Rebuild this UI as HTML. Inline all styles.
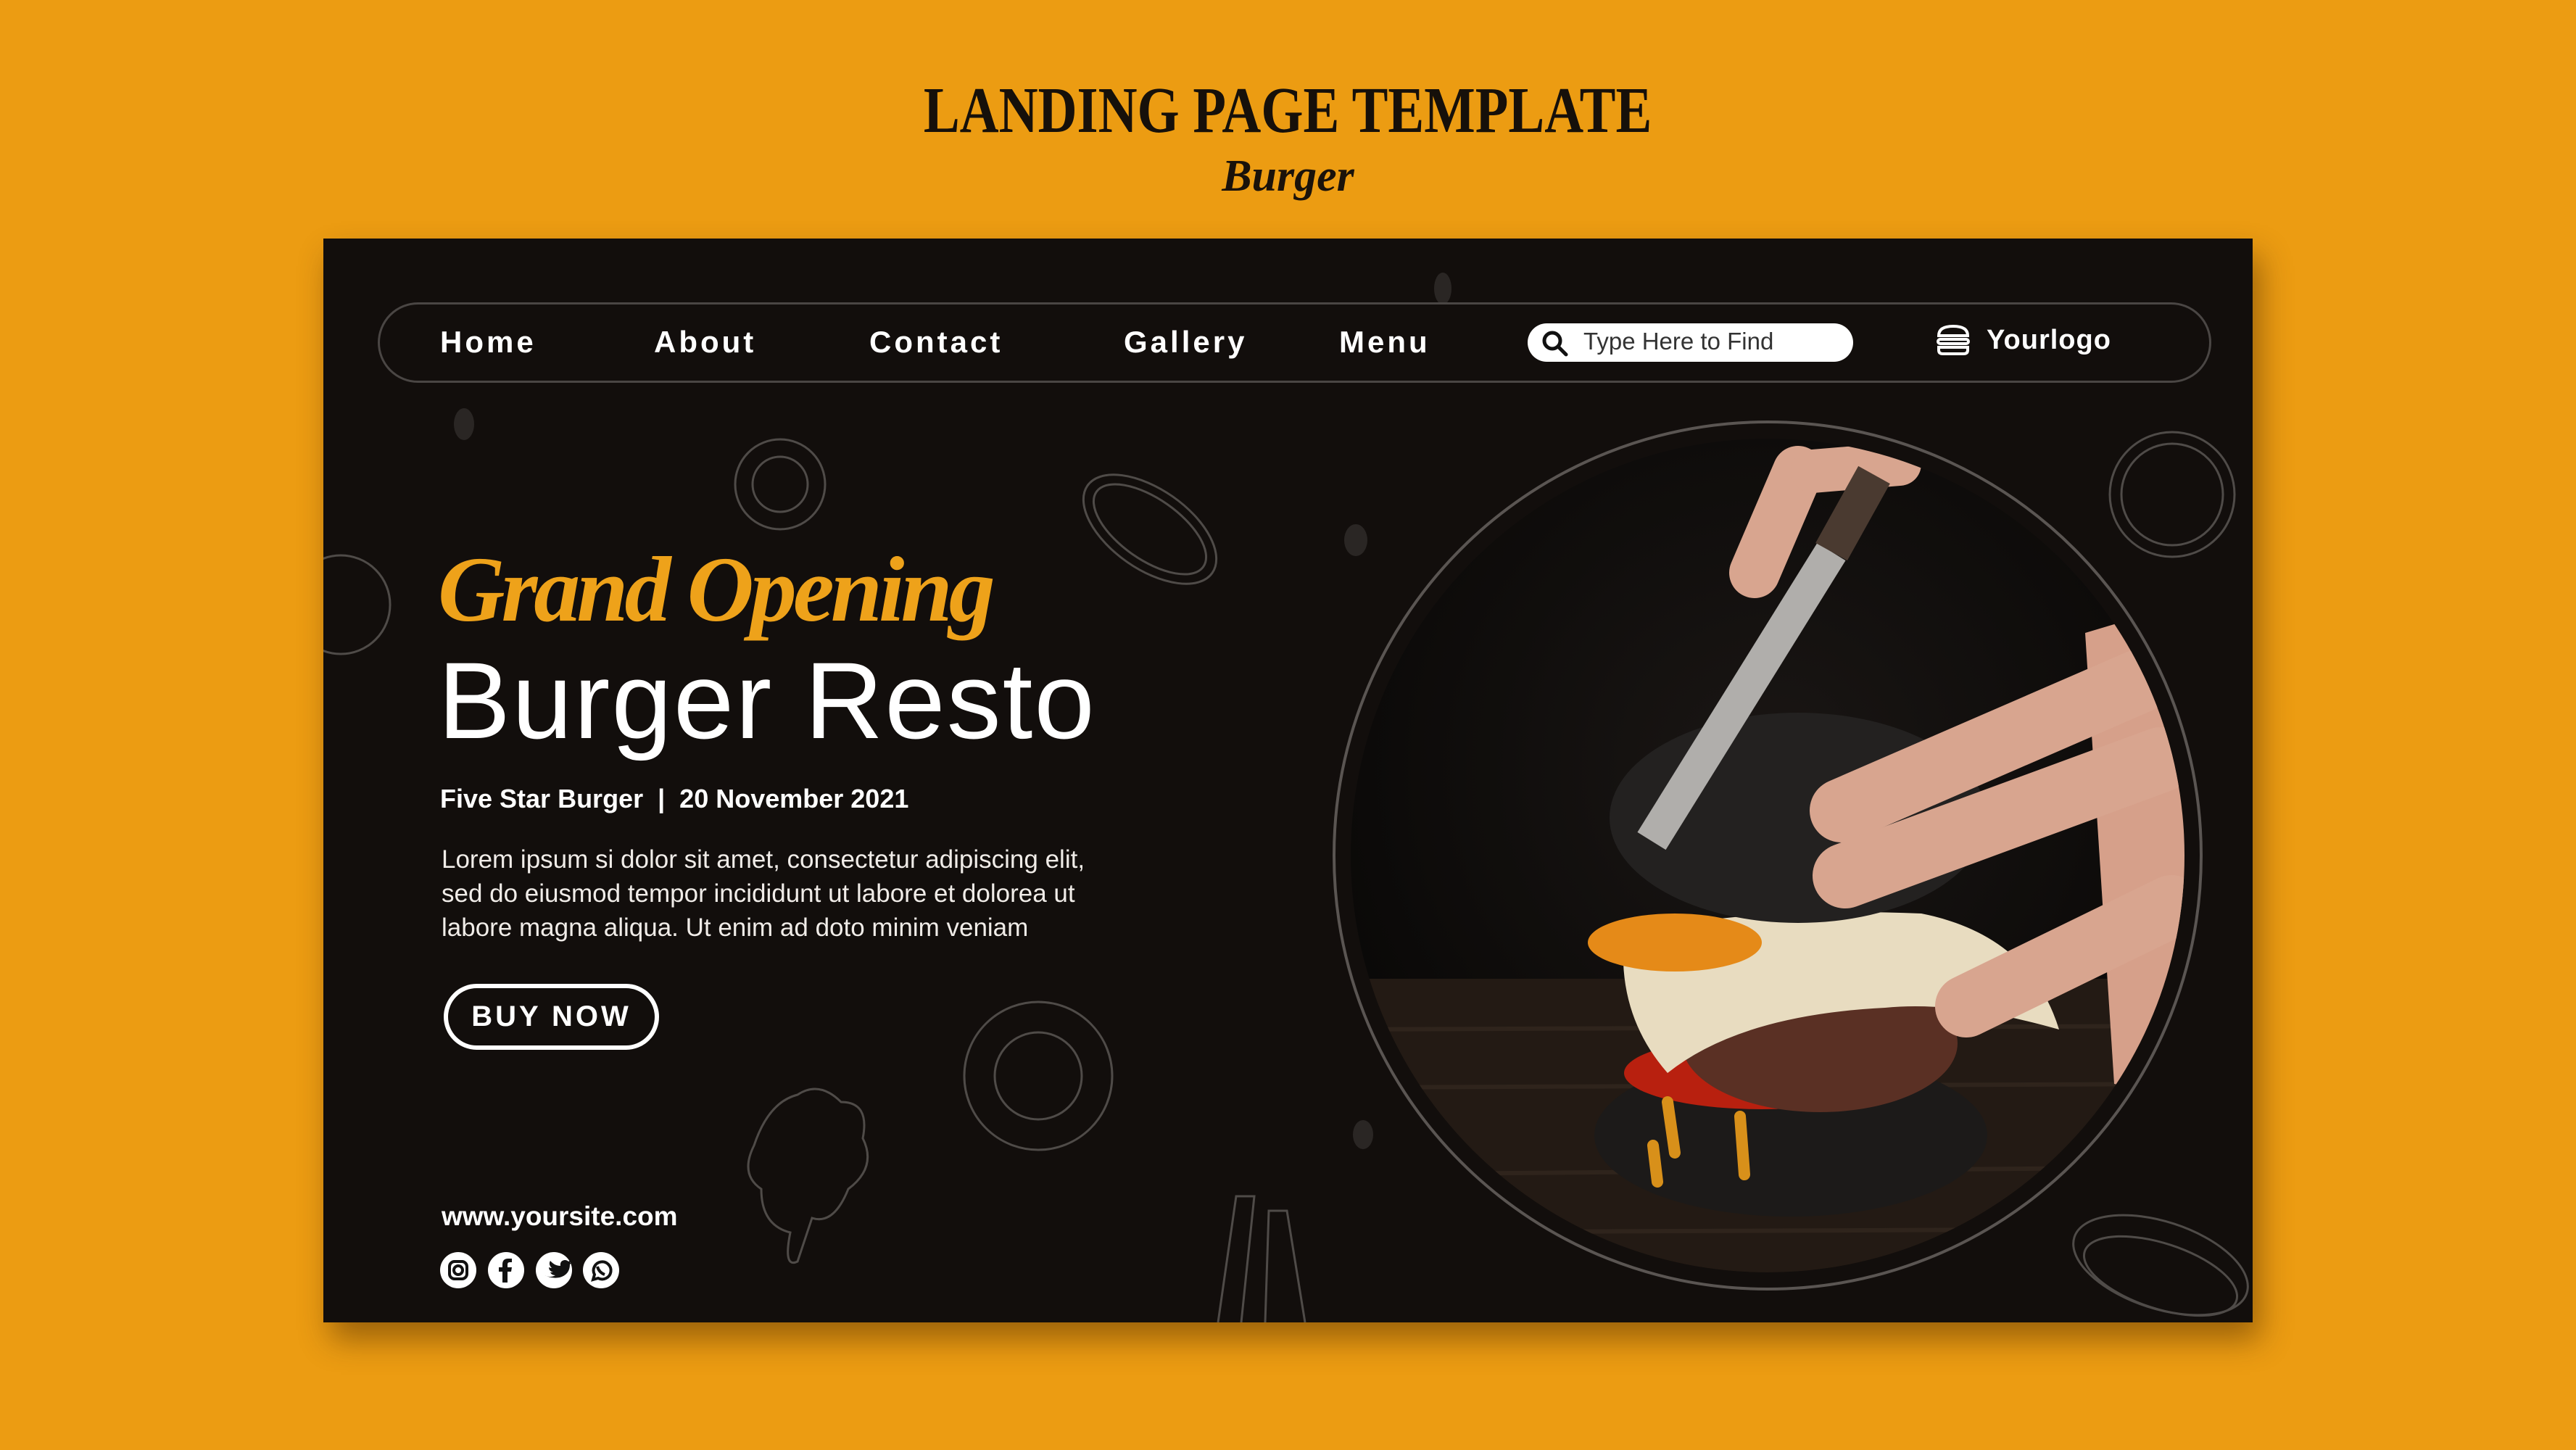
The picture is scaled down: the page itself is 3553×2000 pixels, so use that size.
<!DOCTYPE html>
<html><head><meta charset="utf-8"><style>
*{margin:0;padding:0;box-sizing:border-box}
body{width:3553px;height:2000px;background:#ec9c12;position:relative;overflow:hidden;font-family:"Liberation Sans",sans-serif}
.a{position:absolute;white-space:nowrap}
.title{left:0;width:3553px;top:108px;text-align:center;font-family:"Liberation Serif",serif;font-weight:bold;font-size:90px;color:#16100a;line-height:1}
.title span{display:inline-block;transform:scaleX(.83)}
.burger{left:0;width:3553px;top:208px;text-align:center;font-family:"Liberation Serif",serif;font-style:italic;font-weight:bold;font-size:62px;color:#1a120a}
.panel{left:446px;top:329px;width:2661px;height:1495px;background:#120e0c;box-shadow:10px 24px 40px rgba(60,30,0,.45);overflow:hidden}
.nav{left:521px;top:417px;width:2529px;height:111px;border:3px solid #4a4644;border-radius:56px}
.nv{top:448px;font-size:42px;font-weight:bold;color:#fff;letter-spacing:4px}
.search{left:2107px;top:446px;width:449px;height:53px;background:#fff;border-radius:27px}
.st{left:2184px;top:452px;font-size:33px;color:#333}
.h1{left:604px;top:740px;font-family:"Liberation Serif",serif;font-style:italic;font-weight:bold;font-size:128px;color:#eea21a;letter-spacing:-5px}
.h2{left:604px;top:880px;font-size:150px;color:#fff;letter-spacing:2px}
.sub{left:607px;top:1081px;font-size:36px;color:#fff;font-weight:bold}
.lor{left:609px;top:1162px;font-size:35px;color:#f0ece8;line-height:47px}
.btn{left:612px;top:1357px;width:297px;height:91px;border:6px solid #fff;border-radius:46px;color:#fff;font-size:40px;font-weight:bold;letter-spacing:4px;text-align:center;line-height:79px}
.site{left:609px;top:1657px;font-size:37px;font-weight:bold;color:#fff}
.ic{top:1727px;width:50px;height:50px;border-radius:50%;background:#fff}
</style></head><body>
<div class="a title"><span>LANDING PAGE TEMPLATE</span></div>
<div class="a burger">Burger</div>
<div class="a panel"></div>
<svg class="a" style="left:0;top:0" width="3553" height="2000" viewBox="0 0 3553 2000">
<defs><clipPath id="p"><rect x="446" y="329" width="2661" height="1495"/></clipPath>
<clipPath id="c"><circle cx="2438" cy="1180" r="575"/></clipPath>
<radialGradient id="bg" cx="0.5" cy="0.4" r="0.6"><stop offset="0" stop-color="#1a1614"/><stop offset="1" stop-color="#080706"/></radialGradient></defs>
<g clip-path="url(#p)" fill="none" stroke="#4f4b48" stroke-width="3">
<circle cx="1076" cy="668" r="62"/><circle cx="1076" cy="668" r="38"/>
<ellipse cx="1586" cy="730" rx="105" ry="55" transform="rotate(35 1586 730)"/><ellipse cx="1586" cy="730" rx="90" ry="42" transform="rotate(35 1586 730)"/>
<circle cx="1432" cy="1484" r="102"/><circle cx="1432" cy="1484" r="60"/>
<circle cx="2996" cy="682" r="86"/><circle cx="2996" cy="682" r="70"/>
<circle cx="470" cy="834" r="68"/>
<ellipse cx="2980" cy="1745" rx="125" ry="60" transform="rotate(18 2980 1745)"/><ellipse cx="2980" cy="1760" rx="110" ry="45" transform="rotate(18 2980 1760)"/>
<path d="M1680 1824 L1705 1650 L1730 1650 L1712 1824 M1745 1824 L1750 1670 L1775 1670 L1800 1824"/>
<path d="M1040 1580 q20-60 60-70 q30-20 60 10 q40 0 30 50 q20 40-20 70 q-20 50-50 40 l-20 60 q-20 10-10-40 q-40-10-40-60 q-30-20-10-60z"/>
<circle cx="2438" cy="1180" r="598" stroke="#5a5552" stroke-width="4"/>
</g>
<g fill="#2a2624"><ellipse cx="640" cy="585" rx="14" ry="22"/><ellipse cx="1990" cy="398" rx="12" ry="22"/><ellipse cx="1880" cy="1565" rx="14" ry="20"/><ellipse cx="1870" cy="745" rx="16" ry="22"/></g>
<g clip-path="url(#c)">
<rect x="1850" y="590" width="1180" height="1180" fill="url(#bg)"/>
<rect x="1850" y="1350" width="1180" height="420" fill="#231a14"/>
<g stroke="#2f241c" stroke-width="6"><line x1="1850" y1="1420" x2="3030" y2="1415"/><line x1="1850" y1="1500" x2="3030" y2="1495"/><line x1="1850" y1="1620" x2="3030" y2="1610"/><line x1="1850" y1="1700" x2="3030" y2="1695"/></g>
<ellipse cx="2470" cy="1566" rx="271" ry="112" fill="#1c1a19"/>
<ellipse cx="2430" cy="1480" rx="190" ry="50" fill="#b8200f"/>
<ellipse cx="2510" cy="1439" rx="190" ry="95" fill="#5a3024"/>
<path d="M2240 1290 Q2400 1250 2650 1260 Q2800 1290 2840 1420 Q2700 1380 2600 1390 Q2400 1400 2300 1480 Q2230 1400 2240 1290z" fill="#e8dcc0"/>
<ellipse cx="2310" cy="1300" rx="120" ry="40" fill="#e58a18"/>
<path d="M2300 1520 l10 70 M2400 1540 l6 80 M2280 1580 l6 50" stroke="#d8901a" stroke-width="16" stroke-linecap="round"/>
<ellipse cx="2480" cy="1128" rx="260" ry="145" fill="#232120"/>
<path d="M2876 873 L3090 809 L3090 1527 L2916 1495z" fill="#d6a08a"/>
<g stroke="#d8a58f" stroke-linecap="round"><line x1="2540" y1="1118" x2="2950" y2="940" stroke-width="88"/><line x1="2545" y1="1208" x2="2980" y2="1048" stroke-width="90"/><line x1="2712" y1="1388" x2="2995" y2="1250" stroke-width="86"/>
<line x1="2420" y1="790" x2="2480" y2="650" stroke-width="70"/><line x1="2500" y1="650" x2="2620" y2="640" stroke-width="60"/></g>
<line x1="2278" y1="1160" x2="2526" y2="761" stroke="#b0aeab" stroke-width="46"/>
<line x1="2526" y1="761" x2="2585" y2="655" stroke="#4a3a30" stroke-width="50"/>
</g>
</svg>
<div class="a nav"></div>
<div class="a nv" style="left:607px">Home</div>
<div class="a nv" style="left:902px">About</div>
<div class="a nv" style="left:1199px">Contact</div>
<div class="a nv" style="left:1550px">Gallery</div>
<div class="a nv" style="left:1847px">Menu</div>
<div class="a search"></div>
<svg class="a" style="left:2125px;top:454px" width="40" height="40" viewBox="0 0 40 40"><circle cx="16" cy="16" r="11" fill="none" stroke="#111" stroke-width="5"/><line x1="24" y1="24" x2="35" y2="35" stroke="#111" stroke-width="5" stroke-linecap="round"/></svg>
<div class="a st">Type Here to Find</div>
<svg class="a" style="left:2670px;top:447px" width="48" height="44" viewBox="0 0 48 44" fill="none" stroke="#fff" stroke-width="4"><path d="M4 16 Q4 3 24 3 Q44 3 44 16z"/><rect x="3" y="21" width="42" height="6" rx="3"/><path d="M4 32 h40 v4 q0 5-6 5 h-28 q-6 0-6-5z"/></svg>
<div class="a nv" style="left:2740px;letter-spacing:1px;font-size:38px">Yourlogo</div>
<div class="a h1">Grand Opening</div>
<div class="a h2">Burger Resto</div>
<div class="a sub">Five Star Burger &nbsp;|&nbsp; 20 November 2021</div>
<div class="a lor">Lorem ipsum si dolor sit amet, consectetur adipiscing elit,<br>sed do eiusmod tempor incididunt ut labore et dolorea ut<br>labore magna aliqua. Ut enim ad doto minim veniam</div>
<div class="a btn">BUY NOW</div>
<div class="a site">www.yoursite.com</div>
<div class="a ic" style="left:607px"><svg width="50" height="50" viewBox="0 0 50 50" fill="none" stroke="#111" stroke-width="4"><rect x="13" y="13" width="24" height="24" rx="7"/><circle cx="25" cy="25" r="6"/></svg></div>
<div class="a ic" style="left:673px"><svg width="50" height="50" viewBox="0 0 50 50"><path d="M27 42 V27 h5 l1-6 h-6 v-4 q0-3 3-3 h3 v-5 h-5 q-8 0-8 8 v4 h-5 v6 h5 v15z" fill="#111"/></svg></div>
<div class="a ic" style="left:739px"><svg width="50" height="50" viewBox="0 0 50 50"><path d="M12 32 q8 4 15 0 q-5 0-7-4 h4 q-6-2-6-7 q2 1 4 1 q-5-5-2-10 q6 7 14 7 q-1-7 6-8 q3 0 5 2 l4-2 l-2 4 l3-1 l-3 3 q0 14-14 18 q-10 2-21-3z" fill="#111"/></svg></div>
<div class="a ic" style="left:804px"><svg width="50" height="50" viewBox="0 0 50 50" fill="none" stroke="#111" stroke-width="4"><path d="M14 38 l2-7 a12 12 0 1 1 5 5z"/><path d="M20 20 q2 8 10 11" stroke-width="4"/></svg></div>
</body></html>
